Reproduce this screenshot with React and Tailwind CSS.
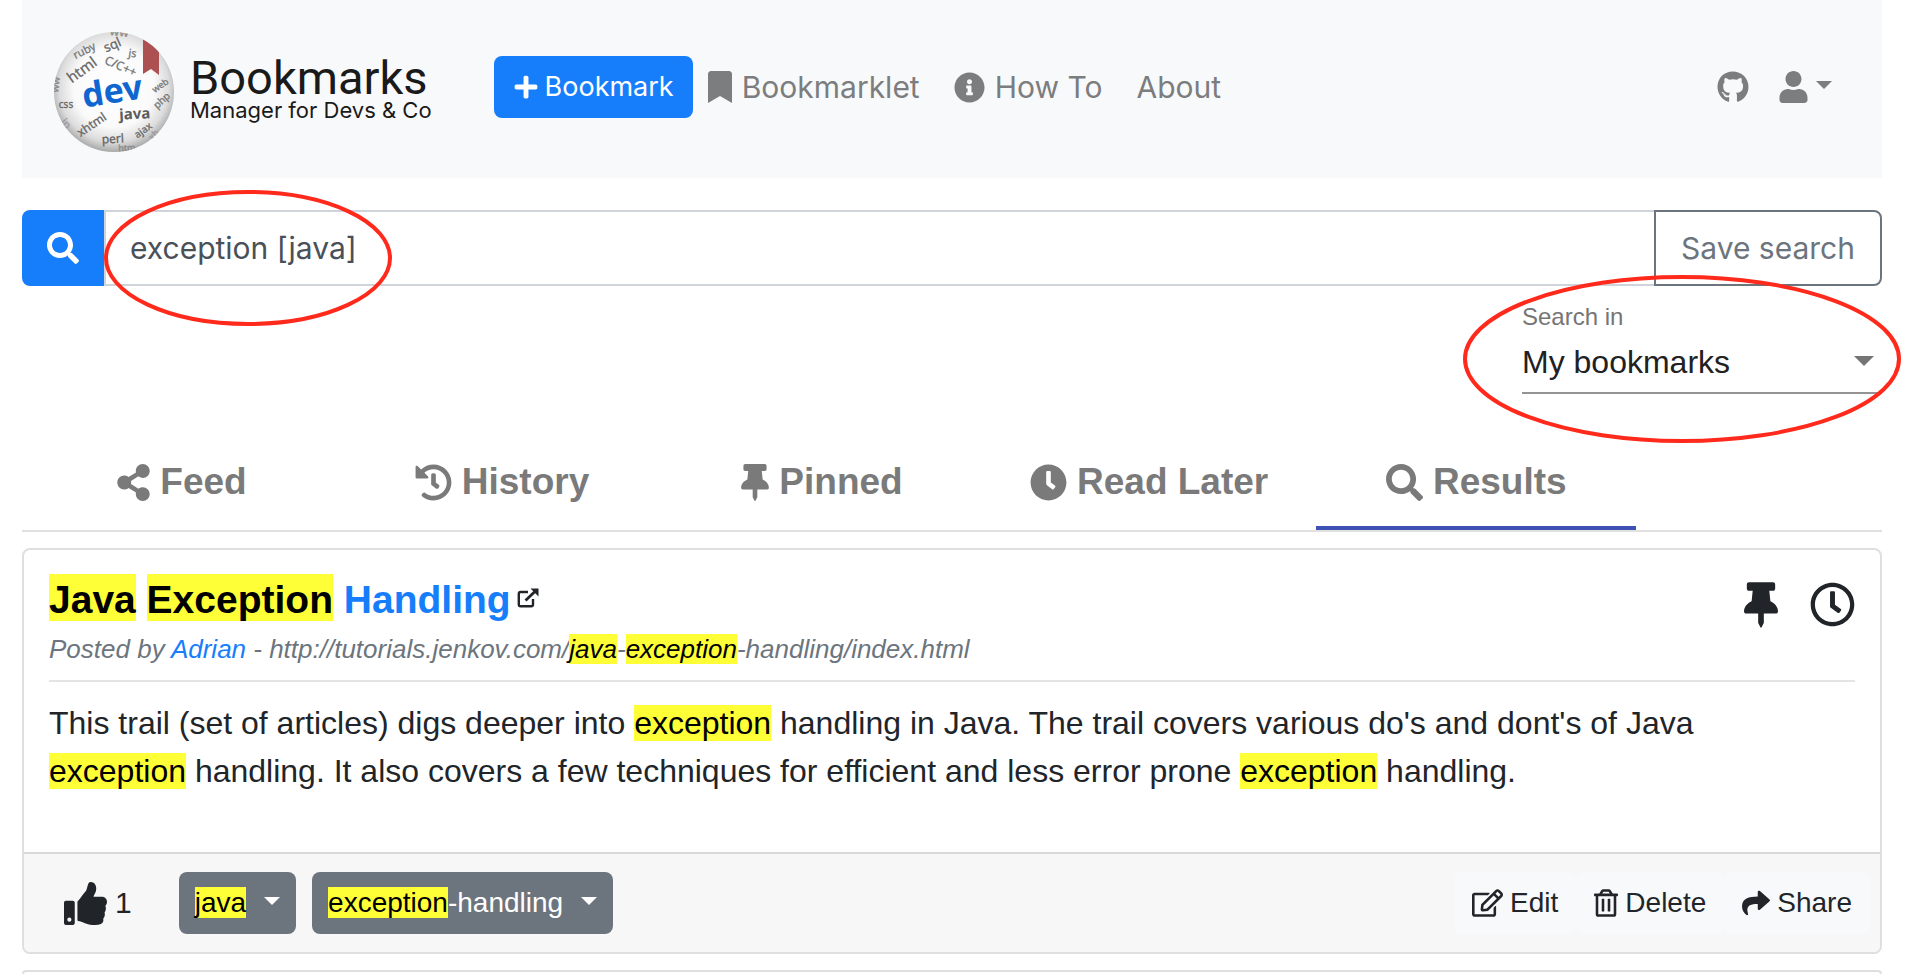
import {
  FaBookmark, FaClock, FaGithub, FaHistory, FaInfoCircle, FaPlus, FaRegClock, FaRegEdit,
  FaRegTrashAlt, FaSearch, FaShare, FaShareAlt, FaThumbsUp, FaThumbtack, FaUser,
} from "react-icons/fa";

const WORDS = [
  { t: "ww", x: 65, y: 4, r: 6, s: 12, f: "#8a8a8a" },
  { t: "ruby", x: 32, y: 22, r: -27, s: 11, f: "#777" },
  { t: "sql", x: 60, y: 17, r: -24, s: 13, f: "#666" },
  { t: "js", x: 78, y: 25, r: 8, s: 11, f: "#777" },
  { t: "html", x: 31, y: 42, r: -36, s: 15, f: "#666" },
  { t: "C/C++", x: 65, y: 38, r: 24, s: 12, f: "#777" },
  { t: "web", x: 108, y: 56, r: -34, s: 9, f: "#777" },
  { t: "php", x: 110, y: 71, r: -42, s: 10, f: "#777" },
  { t: "css", x: 12, y: 76, r: 0, s: 10, f: "#666" },
  { t: "xhtml", x: 40, y: 96, r: -34, s: 12, f: "#666" },
  { t: "ajax", x: 91, y: 101, r: -36, s: 10, f: "#666" },
  { t: "perl", x: 59, y: 111, r: -3, s: 12, f: "#666" },
  { t: "htm", x: 73, y: 119, r: -4, s: 9, f: "#888" },
  { t: "ww", x: 5, y: 53, r: -84, s: 10, f: "#888" },
  { t: "ip", x: 9, y: 94, r: 50, s: 11, f: "#999" },
  { t: "xh", x: 102, y: 105, r: -45, s: 9, f: "#999" },
];

function Logo() {
  return (
    <svg viewBox="0 0 120 120" className="size-[120px] shrink-0" aria-hidden="true" fontFamily="'Noto Sans', sans-serif" textAnchor="middle">
      <defs>
        <radialGradient id="ball" cx="50%" cy="46%" r="54%">
          <stop offset="0" stopColor="#fff" />
          <stop offset="0.62" stopColor="#fafafa" />
          <stop offset="0.85" stopColor="#dcdcdc" />
          <stop offset="1" stopColor="#a9a9a9" />
        </radialGradient>
        <clipPath id="round"><circle cx="60" cy="60" r="60" /></clipPath>
      </defs>
      <g clipPath="url(#round)">
        <rect width="120" height="120" fill="url(#ball)" />
        {WORDS.map((w, i) => (
          <text key={i} transform={`translate(${w.x} ${w.y}) rotate(${w.r})`} fontSize={w.s} fill={w.f} stroke={w.f} strokeWidth="0.3">{w.t}</text>
        ))}
        <text transform="translate(81 87) rotate(-3)" fontSize="15" fontWeight="700" fill="#5c5c5c">java</text>
        <text transform="translate(60 71) rotate(-9)" fontSize="34" fontWeight="700" fill="#0f66d0">dev</text>
        <path d="M89 7 L105 17 V43 L97 37 L89 42 Z" fill="#ad5052" />
      </g>
    </svg>
  );
}

function Caret({ className }) {
  return <svg viewBox="0 0 20 10" className={className} fill="currentColor" aria-hidden="true"><path d="M0 0H20L10 10Z" /></svg>;
}

function ExternalIcon() {
  return (
    <svg viewBox="0 0 22 20" className="mb-1 h-5 w-[22px]" fill="none" stroke="#212529" strokeWidth="2.4" strokeLinejoin="round" aria-hidden="true">
      <path d="M11 4H3.6Q1.8 4 1.8 5.8V16.4Q1.8 18.2 3.6 18.2H14.2Q16 18.2 16 16.4V11" />
      <path d="M8.5 12.5L18 3.5" strokeWidth="2.8" />
      <path d="M13.5 0.5H21.5V8.5Z" fill="#212529" stroke="none" />
    </svg>
  );
}

function Mark({ children, className = "" }) {
  return <mark className={`bg-[#ffff38] text-black ${className}`}>{children}</mark>;
}

const TABS = [
  { label: "Feed", Icon: FaShareAlt, size: "h-[37px] w-[33px]" },
  { label: "History", Icon: FaHistory, size: "size-[37px]" },
  { label: "Pinned", Icon: FaThumbtack, size: "h-[37px] w-7" },
  { label: "Read Later", Icon: FaClock, size: "size-[37px]" },
  { label: "Results", Icon: FaSearch, size: "size-[37px]", active: true },
];

const ACTIONS = [
  { label: "Edit", Icon: FaRegEdit, size: "h-7 w-[31px]" },
  { label: "Delete", Icon: FaRegTrashAlt, size: "h-7 w-6" },
  { label: "Share", Icon: FaShare, size: "size-7" },
];

function Header() {
  return (
    <header className="flex items-center bg-[#f8f9fb] pt-8 pr-12 pb-[26px] pl-8 font-['Inter',sans-serif] text-[#7c7d7e]">
      <a href="#home" className="flex items-center gap-4 text-[#1a1a1a]">
        <Logo />
        <span className="mb-1 flex flex-col">
          <span className="font-['Roboto',sans-serif] text-[47px] leading-10">Bookmarks</span>
          <span className="text-[22px] leading-6">Manager for Devs &amp; Co</span>
        </span>
      </a>
      <nav className="mb-[10px] ml-[62px] flex flex-1 items-center text-[30px] leading-10">
        <button type="button" className="flex h-[62px] items-center gap-[6px] rounded-lg bg-[#167efb] px-[19px] text-[27px] text-white">
          <FaPlus className="size-[26px]" />Bookmark
        </button>
        <a href="#bookmarklet" className="ml-[15px] flex items-center gap-[10px]"><FaBookmark className="h-8 w-6" />Bookmarklet</a>
        <a href="#howto" className="ml-[34px] flex items-center gap-[10px]"><FaInfoCircle className="size-[31px]" />How To</a>
        <a href="#about" className="ml-[34px]">About</a>
        <a href="#github" aria-label="GitHub" className="ml-auto"><FaGithub className="size-8" /></a>
        <button type="button" aria-label="Account" className="ml-[30px] flex items-center gap-[6px]">
          <FaUser className="h-8 w-[29px]" /><Caret className="mb-1 h-2 w-5" />
        </button>
      </nav>
    </header>
  );
}

function SearchBar() {
  return (
    <form className="mt-8 flex h-[76px] font-['Inter',sans-serif] text-[30px]" onSubmit={(e) => e.preventDefault()}>
      <button type="submit" aria-label="Search" className="flex w-[82px] items-center justify-center rounded-l-lg bg-[#167efb] text-white">
        <FaSearch className="size-8" />
      </button>
      <input aria-label="Search bookmarks" defaultValue="exception [java]" className="min-w-0 flex-1 border-2 border-r-0 border-[#ced4da] bg-white px-6 text-[#495057] outline-none" />
      <button type="button" className="rounded-r-lg border-2 border-[#6c757d] px-[25px] text-[#6c757d]">Save search</button>
    </form>
  );
}

function Scope() {
  return (
    <div className="mt-[17px] ml-auto w-[360px] border-b-2 border-[#949494] pb-2">
      <label htmlFor="scope" className="block text-[24px] leading-7 text-[#757575]">Search in</label>
      <div className="relative mt-[9px]">
        <select id="scope" className="block h-11 w-full appearance-none bg-transparent text-[32px] leading-[44px] text-[#212121] outline-none">
          <option>My bookmarks</option>
        </select>
        <Caret className="pointer-events-none absolute top-4 right-2 h-[10px] w-5 text-[#757575]" />
      </div>
    </div>
  );
}

function Tabs() {
  return (
    <div role="tablist" className="mt-10 flex border-b-2 border-[#e0e0e0]">
      {TABS.map(({ label, Icon, size, active }) => (
        <button
          key={label}
          type="button"
          role="tab"
          aria-selected={!!active}
          className={`flex h-24 min-w-[320px] items-center justify-center gap-[10px] border-b-4 px-12 pt-1 text-[37px] font-bold text-[#7a7a7a] ${active ? "border-[#3f51b5]" : "border-transparent"}`}
        >
          <Icon className={size} />{label}
        </button>
      ))}
    </div>
  );
}

function Tag({ children }) {
  return (
    <button type="button" className="flex h-[62px] items-center gap-[18px] rounded-lg bg-[#6c757d] px-4 text-white">
      <span>{children}</span><Caret className="mb-1 h-2 w-4" />
    </button>
  );
}

function Bookmark() {
  return (
    <article className="mt-4 rounded-lg border-2 border-[#dfdfdf]">
      <div className="px-[25px] pt-[26px] pb-[57px]">
        <div className="flex justify-between border-b-2 border-[#e4e4e4] pb-[15px]">
          <div>
            <h2 className="flex items-center gap-[6px] text-[39px] leading-[48px] font-bold">
              <a href="#handling" className="text-[#167efb]"><Mark className="pt-1">Java</Mark> <Mark className="pt-1">Exception</Mark> Handling</a>
              <ExternalIcon />
            </h2>
            <p className="mt-[9px] text-[26px] leading-8 text-[#6c757d] italic">
              Posted by <a href="#adrian" className="text-[#167efb]">Adrian</a> - http://tutorials.jenkov.com/<Mark>java</Mark>-<Mark>exception</Mark>-handling/index.html
            </p>
          </div>
          <div className="flex items-start gap-8 pt-[6px]">
            <button type="button" aria-label="Pin"><FaThumbtack className="h-[46px] w-[34px]" /></button>
            <button type="button" aria-label="Read later"><FaRegClock className="size-[45px]" /></button>
          </div>
        </div>
        <p className="mt-[17px] pr-12 text-[32px] leading-[48px]">
          This trail (set of articles) digs deeper into <Mark>exception</Mark> handling in Java. The trail covers various do's and dont's of Java <Mark>exception</Mark> handling. It also covers a few techniques for efficient and less error prone <Mark>exception</Mark> handling.
        </p>
      </div>
      <footer className="flex items-center gap-4 rounded-b-lg border-t-2 border-[#d9d9d9] bg-[#f7f7f7] py-[18px] pr-[10px] pl-10 text-[28px] leading-8">
        <button type="button" aria-label="Like, 1" className="mr-[31px] flex items-center gap-2 text-[30px]">
          <FaThumbsUp className="size-[43px]" />1
        </button>
        <Tag><Mark>java</Mark></Tag>
        <Tag><Mark>exception</Mark>-handling</Tag>
        <div className="ml-auto flex">
          {ACTIONS.map(({ label, Icon, size }) => (
            <button key={label} type="button" className="flex h-[62px] items-center gap-[7px] rounded-lg bg-[#f8f9fb] px-[18px]">
              <Icon className={size} />{label}
            </button>
          ))}
        </div>
      </footer>
    </article>
  );
}

export default function App() {
  return (
    <div className="relative bg-white pr-7 pl-[22px] font-['Liberation_Sans',Arial,sans-serif] text-[#212529]">
      <Header />
      <main>
        <SearchBar />
        <Scope />
        <Tabs />
        <Bookmark />
        <div className="mt-4 h-1 rounded-t-lg border-x-2 border-t-2 border-[#dfdfdf]" />
      </main>
      <svg className="pointer-events-none absolute top-[189px] left-[103px] h-[138px] w-[290px]" viewBox="0 0 290 138" fill="none" stroke="#ff2a1c" strokeWidth="4" aria-hidden="true">
        <ellipse cx="145" cy="69" rx="142" ry="66" />
      </svg>
      <svg className="pointer-events-none absolute top-[273px] right-[6px] h-[172px] w-[442px]" viewBox="0 0 442 172" fill="none" stroke="#ff2a1c" strokeWidth="4" aria-hidden="true">
        <ellipse cx="220" cy="86" rx="217" ry="82" />
      </svg>
    </div>
  );
}
